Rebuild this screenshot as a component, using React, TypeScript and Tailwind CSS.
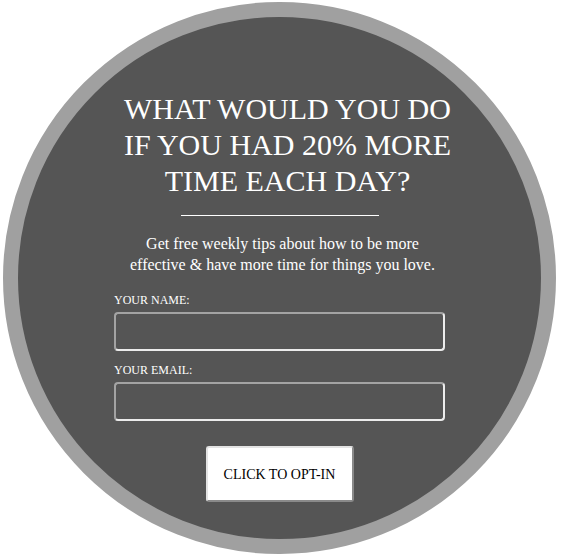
import React from 'react';

const serif = { fontFamily: '"Liberation Serif", "Times New Roman", serif' };

const Field = ({ label }: { label: string }) => (
  <div className="flex flex-col">
    <label className="text-[12px] leading-[14px] text-white uppercase">{label}</label>
    <input
      type="text"
      className="mt-[5px] h-[39px] w-full rounded-[4px] border-2 border-t-[#a3a3a3] border-l-[#a3a3a3] border-b-[#ececec] border-r-[#ececec] bg-transparent outline-none"
    />
  </div>
);

export default function App() {
  return (
    <div className="w-[561px] h-[559px] bg-white" style={serif}>
      <div className="ml-[3px] mt-[2px] w-[553px] h-[552px] rounded-full border-[15px] border-[#a0a0a0] bg-[#555555]">
        <div className="flex flex-col items-center pt-[74px]">
          <h1 className="pl-[16px] text-center text-[30px] leading-[36px] text-white">
            WHAT WOULD YOU DO
            <br />
            IF YOU HAD 20% MORE
            <br />
            TIME EACH DAY?
          </h1>
          <div className="mt-[16px] h-px w-[198px] bg-white" />
          <p className="mt-[17px] pl-[6px] text-center text-[16px] leading-[21px] text-white">
            Get free weekly tips about how to be more
            <br />
            effective &amp; have more time for things you love.
          </p>
          <form className="mt-[18px] flex w-[331px] flex-col gap-[12px]">
            <Field label="Your Name:" />
            <Field label="Your Email:" />
            <div className="flex justify-center pt-[13px]">
              <button
                type="button"
                className="h-[56px] w-[148px] rounded-[3px] border-2 border-t-[#e3e3e3] border-l-[#e3e3e3] border-b-[#8a8a8a] border-r-[#8a8a8a] bg-white text-[14px] text-black"
              >
                CLICK TO OPT-IN
              </button>
            </div>
          </form>
        </div>
      </div>
    </div>
  );
}
